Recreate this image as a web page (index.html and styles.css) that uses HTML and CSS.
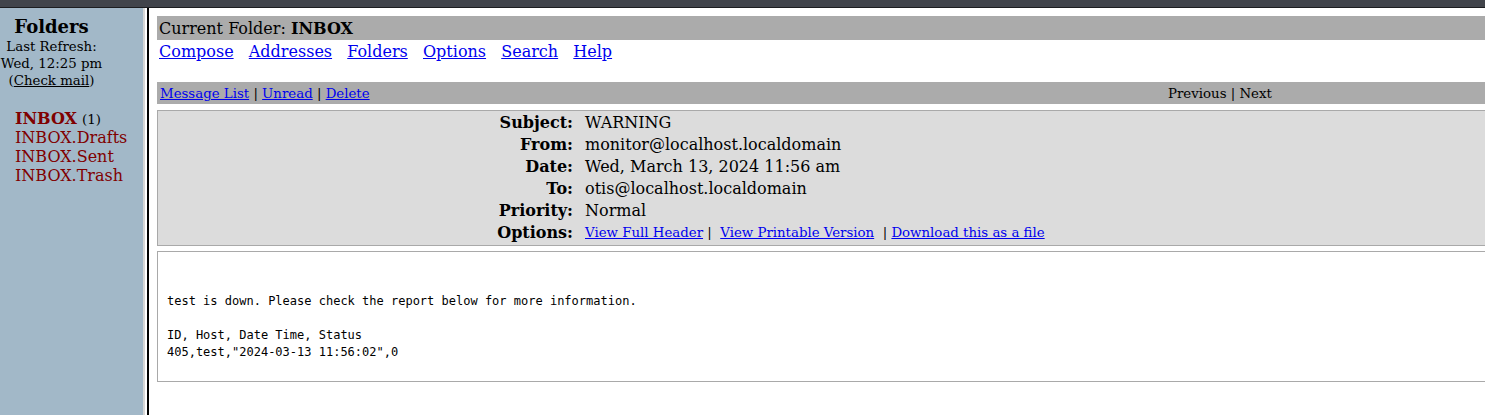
FILE: index.html
```html
<!DOCTYPE html>
<html>
<head>
<meta charset="utf-8">
<link rel="stylesheet" href="styles.css">
</head>
<body>
<div class="titlebar"></div>
<div class="frames">
  <div class="left">
    <div class="lefthead">
      <div class="ftitle">Folders</div>
      <div class="refresh">Last Refresh:<br>Wed, 12:25 pm<br>(<a href="#" class="check">Check mail</a>)</div>
    </div>
    <ul class="flist">
      <li><a href="#" class="fold cur">INBOX</a> <span class="cnt">(1)</span></li>
      <li><a href="#" class="fold">INBOX.Drafts</a></li>
      <li><a href="#" class="fold">INBOX.Sent</a></li>
      <li><a href="#" class="fold">INBOX.Trash</a></li>
    </ul>
  </div>
  <div class="divider"></div>
  <div class="right">
    <div class="curbar">Current Folder: <b>INBOX</b></div>
    <div class="menu">
      <a href="#">Compose</a><a href="#">Addresses</a><a href="#">Folders</a><a href="#">Options</a><a href="#">Search</a><a href="#">Help</a>
    </div>
    <div class="navbar">
      <div class="navleft"><a href="#">Message List</a> | <a href="#">Unread</a> | <a href="#">Delete</a></div>
      <div class="navright">Previous | Next</div>
    </div>
    <div class="headers">
      <div class="lbl">Subject:</div><div class="val">WARNING</div>
      <div class="lbl">From:</div><div class="val">monitor@localhost.localdomain</div>
      <div class="lbl">Date:</div><div class="val">Wed, March 13, 2024 11:56 am</div>
      <div class="lbl">To:</div><div class="val">otis@localhost.localdomain</div>
      <div class="lbl">Priority:</div><div class="val">Normal</div>
      <div class="lbl">Options:</div><div class="val opts"><a href="#">View Full Header</a>&nbsp;|&nbsp; <a href="#">View Printable Version</a> &nbsp;|&nbsp;<a href="#">Download this as a file</a></div>
    </div>
    <div class="msgbody"><br><br>test is down. Please check the report below for more information.<br><br>ID, Host, Date Time, Status<br>405,test,"2024-03-13 11:56:02",0<br><br></div>
  </div>
</div>
</body>
</html>
```
FILE: styles.css
```css
html, body {
  margin: 0;
  padding: 0;
  height: 100%;
  overflow: hidden;
  background: #ffffff;
  font-family: "DejaVu Serif", serif;
  font-size: 16px;
  color: #000;
}
.titlebar {
  height: 7px;
  background: #41444b;
  border-bottom: 1px solid #1c1d20;
}
.frames {
  display: flex;
  height: calc(100% - 8px);
}
.left {
  width: 143px;
  flex: none;
  background: #a2b8c8;
}
.divider {
  width: 2px;
  flex: none;
  background: #d6d6d6;
  border-right: 2px solid #ffffff;
}
.right {
  flex: 1;
  min-width: 0;
  border-left: 2px solid #000;
  padding: 8px 0 0 8px;
  overflow: hidden;
}
.lefthead {
  width: 103px;
  text-align: center;
  padding-top: 7px;
}
.ftitle {
  font-weight: bold;
  font-size: 18px;
  line-height: 23px;
}
.refresh {
  font-size: 13.33px;
  line-height: 17px;
}
.check {
  color: #000;
}
.flist {
  list-style: none;
  margin: 20px 0 0 15px;
  padding: 0;
}
.flist li {
  height: 19px;
  line-height: 19px;
  white-space: nowrap;
}
.fold {
  color: #800000;
  text-decoration: none;
}
.cur {
  font-weight: bold;
}
.cnt {
  font-size: 13.33px;
  line-height: 0;
}
.curbar {
  background: #ababab;
  height: 23px;
  line-height: 23px;
  padding: 1px 0 0 2px;
}
.menu {
  display: flex;
  gap: 15.2px;
  padding: 1px 0 0 2px;
  line-height: 22px;
  height: 41px;
}
.menu a {
  color: #0000ee;
}
.navbar {
  display: flex;
  background: #ababab;
  height: 21px;
  line-height: 21px;
  padding-top: 1px;
  font-size: 13.33px;
}
.navleft {
  padding-left: 3px;
  width: 1008px;
}
.navleft a {
  color: #0000ee;
}
.headers {
  margin-top: 6px;
  background: #dcdcdc;
  border: 1px solid #a9a9a9;
  border-right: 0;
  display: grid;
  grid-template-columns: 415px 1fr;
  column-gap: 12px;
  padding: 1px 0 1px;
}
.lbl {
  text-align: right;
  font-weight: bold;
  line-height: 22px;
}
.val {
  line-height: 22px;
}
.opts {
  font-size: 13.33px;
}
.opts a {
  color: #0000ee;
}
.msgbody {
  margin-top: 5px;
  border: 1px solid #a9a9a9;
  border-right: 0;
  font-family: "DejaVu Sans Mono", monospace;
  font-size: 12px;
  line-height: 17px;
  padding: 7px 0 3px 9px;
  white-space: nowrap;
}
```
